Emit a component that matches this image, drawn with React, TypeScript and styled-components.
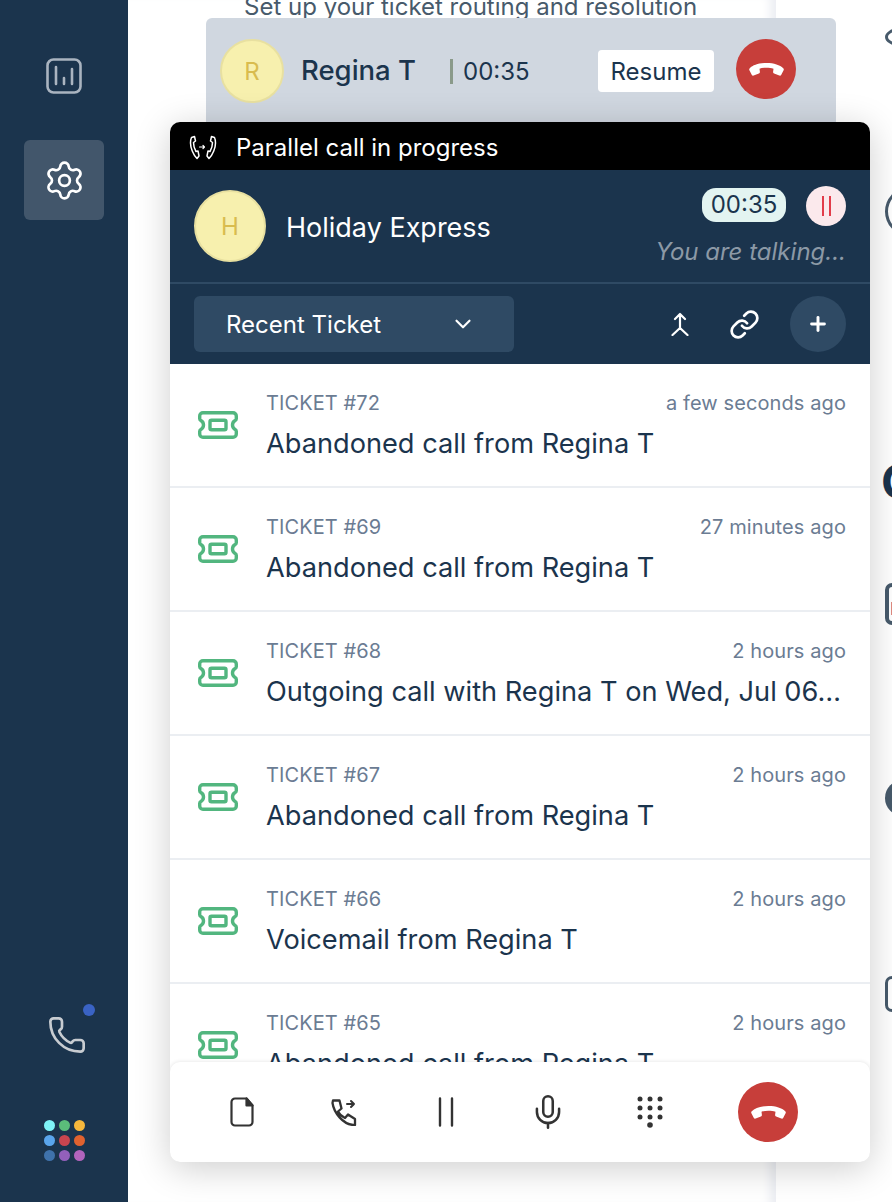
import React from 'react';
import styled, { createGlobalStyle } from 'styled-components';
import { ChevronDown, Link, Mic, Phone, Plus, Settings } from 'lucide-react';

const navy = '#1b344d';

const tickets = [
  { id: 72, when: 'a few seconds ago', title: 'Abandoned call from Regina T' },
  { id: 69, when: '27 minutes ago', title: 'Abandoned call from Regina T' },
  { id: 68, when: '2 hours ago', title: 'Outgoing call with Regina T on Wed, Jul 06, 2022' },
  { id: 67, when: '2 hours ago', title: 'Abandoned call from Regina T' },
  { id: 66, when: '2 hours ago', title: 'Voicemail from Regina T' },
  { id: 65, when: '2 hours ago', title: 'Abandoned call from Regina T' },
];

const appDots = ['#7ef3f7', '#5bbd7a', '#f6b73c', '#5aa5ec', '#c8454f', '#e0622f', '#3f72ab', '#9360ba', '#b264bd'];

const HangUpIcon = () => (
  <svg width="35" height="13" viewBox="0 0 35 13" fill="#fff">
    <path d="M17.500 0C10 0 4 2 .8 5.200c-.6.6-.8 1.300-.4 2.100l2.300 4.500c.4.8 1.200 1.100 2 .8l5.200-2.100c.8-.3 1.100-1 1-1.800l-.4-2.900C12.500 5 15 4.700 17.500 4.700s5 .3 7 1.100l-.4 2.900c-.1.8.2 1.500 1 1.800l5.200 2.100c.8.3 1.600 0 2-.8l2.300-4.500c.4-.8.2-1.500-.4-2.100C31 2 25 0 17.500 0z" />
  </svg>
);

const TicketIcon = () => (
  <svg width="40" height="28" viewBox="0 0 40 28" fill="none" stroke="#52b67f" strokeWidth="3.400" strokeLinejoin="round">
    <path d="M5 1.700h30a3.300 3.300 0 0 1 3.300 3.300v2.800c0 1-.6 1.500-1.500 2-1.500.9-2.300 2.300-2.300 4.200s.8 3.300 2.300 4.200c.9.5 1.500 1 1.500 2V23a3.300 3.300 0 0 1-3.300 3.300H5A3.300 3.300 0 0 1 1.700 23v-2.800c0-1 .6-1.500 1.500-2 1.500-.9 2.300-2.300 2.300-4.200s-.8-3.300-2.300-4.200c-.9-.5-1.500-1-1.500-2V5A3.300 3.300 0 0 1 5 1.700z" />
    <rect x="12" y="9.200" width="16" height="9.600" rx="1.500" />
  </svg>
);

const ChartIcon = () => (
  <svg width="36" height="36" viewBox="0 0 36 36" fill="none" stroke="#aab4c0" strokeWidth="2.600" strokeLinecap="round">
    <rect x="1.500" y="1.500" width="33" height="33" rx="6" />
    <path d="M10 9v17M18 20v6M26 11v15" />
  </svg>
);

const ParallelIcon = () => (
  <svg width="28" height="26" viewBox="0 0 28 26" fill="none" stroke="#fff" strokeWidth="1.500" strokeLinejoin="round" strokeLinecap="round">
    <path d="M2.500 2.500 5.500 1.500 6.500 6 4.500 7.500c0 3.500 1 6.500 2.500 9l2-.5 1 5-2 2.500C4 19.500 1.500 12.500 1.500 8c0-2 .3-4 1-5.500z" />
    <path d="M25.500 2.500 22.500 1.500 21.500 6l2 1.500c0 3.500-1 6.500-2.500 9l-2-.5-1 5 2 2.500C24 19.500 26.500 12.500 26.500 8c0-2-.3-4-1-5.500z" />
    <path d="M10.500 12h5M14 10.500l1.500 1.500-1.500 1.500" strokeWidth="1.200" />
  </svg>
);

const MergeIcon = () => (
  <svg width="18" height="24" viewBox="0 0 18 24" fill="none" stroke="#fff" strokeWidth="2.200" strokeLinecap="round" strokeLinejoin="round">
    <path d="M4 7l5-5 5 5M9 2v14M9 16l-7.500 7M9 16l7.500 7" />
  </svg>
);

const FileIcon = () => (
  <svg width="24" height="30" viewBox="0 0 24 30" fill="none" stroke="#333" strokeWidth="2.200" strokeLinejoin="round">
    <path d="M5 1.500h11.500l6 7V25a3.500 3.500 0 0 1-3.500 3.500H5A3.500 3.500 0 0 1 1.500 25V5A3.500 3.500 0 0 1 5 1.500z" />
    <path d="M16.500 1.500v7h6z" fill="#333" />
  </svg>
);

const TransferIcon = () => (
  <svg width="26" height="27" viewBox="0 0 26 27" fill="none" stroke="#333" strokeWidth="2.300" strokeLinejoin="round" strokeLinecap="round">
    <path d="M2 1.500h6.500l2 8-3.500 3c1.500 3 4 5 7 6.500l3-3.500 7 4.500v6h-2C12 25 3 14 1.500 4z" />
    <path d="M16 5h7M20 2l3 3-3 3" strokeWidth="2" />
  </svg>
);

const PauseBars = () => (
  <svg width="16" height="30" viewBox="0 0 16 30" fill="none" stroke="#333" strokeWidth="2.400" strokeLinecap="round">
    <path d="M2 1.500v27M14 1.500v27" />
  </svg>
);

const DialpadIcon = () => (
  <svg width="26" height="32" viewBox="0 0 26 32" fill="#333">
    {[3, 13, 23].flatMap((cx) => [3, 12, 21].map((cy) => <circle key={`${cx}-${cy}`} cx={cx} cy={cy} r="2.500" />))}
    <circle cx="13" cy="29" r="2.800" />
  </svg>
);

const App: React.FC = () => {
  return (
    <>
      <GlobalStyle />
      <Page>
        <Sidebar>
          <NavItem><ChartIcon /></NavItem>
          <NavItem $active><Settings size={43} strokeWidth={1.5} /></NavItem>
          <SidebarBottom>
            <PhoneButton>
              <Phone size={40} strokeWidth={1.6} />
              <PhoneDot />
            </PhoneButton>
            <AppGrid>
              {appDots.map((color) => <AppDot key={color} $color={color} />)}
            </AppGrid>
          </SidebarBottom>
        </Sidebar>

        <Main>
          <Subtitle>Set up your ticket routing and resolution</Subtitle>
        </Main>

        <RightPanel>
          <RingTop />
          <Ring />
          <Heading>C</Heading>
          <CalendarStub />
          <FilledStub />
          <BoxStub />
        </RightPanel>

        <CallDock>
          <HeldCall>
            <Avatar $size={64}>R</Avatar>
            <HeldName>Regina T</HeldName>
            <HeldTimer>00:35</HeldTimer>
            <ResumeButton>Resume</ResumeButton>
            <EndButton $size={60}><HangUpIcon /></EndButton>
          </HeldCall>

          <Widget>
            <ParallelBar>
              <ParallelIcon />
              Parallel call in progress
            </ParallelBar>

            <CallHeader>
              <Avatar $size={72}>H</Avatar>
              <CallerName>Holiday Express</CallerName>
              <CallStatus>
                <TimerRow>
                  <TimerPill>00:35</TimerPill>
                  <PauseBadge><span /><span /></PauseBadge>
                </TimerRow>
                <Talking>You are talking...</Talking>
              </CallStatus>
            </CallHeader>

            <Toolbar>
              <Dropdown>
                Recent Ticket
                <ChevronDown size={26} strokeWidth={2} />
              </Dropdown>
              <ToolIcons>
                <MergeSlot><MergeIcon /></MergeSlot>
                <Link size={31} strokeWidth={2.1} />
                <AddButton><Plus size={22} strokeWidth={3.2} /></AddButton>
              </ToolIcons>
            </Toolbar>

            <TicketList>
              {tickets.map((ticket) => (
                <TicketRow key={ticket.id}>
                  <TicketIconWrap><TicketIcon /></TicketIconWrap>
                  <TicketBody>
                    <TicketMeta>
                      <span>TICKET #{ticket.id}</span>
                      <span>{ticket.when}</span>
                    </TicketMeta>
                    <TicketTitle>{ticket.title}</TicketTitle>
                  </TicketBody>
                </TicketRow>
              ))}
            </TicketList>

            <ActionBar>
              <ActionSlot><FileIcon /></ActionSlot>
              <ActionSlot><TransferIcon /></ActionSlot>
              <ActionSlot><PauseBars /></ActionSlot>
              <ActionSlot><Mic size={38} strokeWidth={1.6} color="#333" /></ActionSlot>
              <ActionSlot><DialpadIcon /></ActionSlot>
              <ActionEnd $size={60}><HangUpIcon /></ActionEnd>
            </ActionBar>
          </Widget>
        </CallDock>
      </Page>
    </>
  );
};

const GlobalStyle = createGlobalStyle`
  html, body {
    margin: 0;
    padding: 0;
    background: #fff;
  }
  * {
    box-sizing: border-box;
  }
`;

const Page = styled.div`
  position: relative;
  display: flex;
  width: 892px;
  height: 1202px;
  overflow: hidden;
  font-family: Inter, "Liberation Sans", sans-serif;
  color: ${navy};
`;

const Sidebar = styled.nav`
  width: 128px;
  flex-shrink: 0;
  display: flex;
  flex-direction: column;
  align-items: center;
  padding-top: 36px;
  gap: 24px;
  background: ${navy};
`;

const NavItem = styled.div<{ $active?: boolean }>`
  width: 80px;
  height: 80px;
  display: flex;
  align-items: center;
  justify-content: center;
  border-radius: 6px;
  color: #fff;
  background: ${(p) => (p.$active ? '#42566b' : 'transparent')};
`;

const SidebarBottom = styled.div`
  margin-top: auto;
  padding-bottom: 41px;
  display: flex;
  flex-direction: column;
  align-items: center;
  gap: 65px;
`;

const PhoneButton = styled.div`
  position: relative;
  display: flex;
  margin-left: 6px;
  color: #c8ccd1;
`;

const PhoneDot = styled.span`
  position: absolute;
  top: -11px;
  right: -8px;
  width: 12px;
  height: 12px;
  border-radius: 50%;
  background: #3a63c4;
`;

const AppGrid = styled.div`
  display: grid;
  grid-template-columns: repeat(3, 11px);
  gap: 4px;
`;

const AppDot = styled.span<{ $color: string }>`
  width: 11px;
  height: 11px;
  border-radius: 50%;
  background: ${(p) => p.$color};
`;

const Main = styled.main`
  width: 648px;
  flex-shrink: 0;
  padding-left: 116px;
  background: #fff;
  box-shadow: inset -12px 0 10px -6px #eceef3;
`;

const Subtitle = styled.p`
  margin: -8px 0 0;
  font-size: 24px;
  line-height: 30px;
  color: #475a6b;
  white-space: nowrap;
`;

const RightPanel = styled.aside`
  flex: 1;
  display: flex;
  flex-direction: column;
  padding: 28px 0 0 109px;
  background: #fff;
`;

const RingTop = styled.span`
  flex-shrink: 0;
  width: 30px;
  height: 18px;
  border: 3px solid #475a6b;
  border-radius: 50%;
`;

const Ring = styled.span`
  flex-shrink: 0;
  width: 44px;
  height: 47px;
  margin-top: 142px;
  border: 3px solid #475a6b;
  border-radius: 50%;
`;

const Heading = styled.span`
  margin: 223px 0 0 -4px;
  font-size: 48px;
  line-height: 48px;
  font-weight: 700;
  color: ${navy};
`;

const CalendarStub = styled.span`
  position: relative;
  flex-shrink: 0;
  width: 40px;
  height: 42px;
  margin-top: 77px;
  border: 4px solid #475a6b;
  border-radius: 7px;

  &::before {
    content: "";
    position: absolute;
    left: 2px;
    top: 15px;
    width: 2px;
    height: 13px;
    background: #e08a80;
  }
`;

const FilledStub = styled.span`
  flex-shrink: 0;
  width: 36px;
  height: 36px;
  margin-top: 155px;
  border-radius: 50%;
  background: #475a6b;
`;

const BoxStub = styled.span`
  flex-shrink: 0;
  width: 36px;
  height: 36px;
  margin-top: 160px;
  border: 3px solid #475a6b;
  border-radius: 7px;
`;

const CallDock = styled.div`
  position: absolute;
  left: 170px;
  top: 18px;
  width: 700px;
  display: flex;
  flex-direction: column;
`;

const HeldCall = styled.div`
  width: 630px;
  height: 130px;
  margin: 0 0 -26px 36px;
  padding: 21px 40px 0 14px;
  display: flex;
  align-items: flex-start;
  background: #d0d7e0;
  border-radius: 6px;
`;

const Avatar = styled.div<{ $size: number }>`
  width: ${(p) => p.$size}px;
  height: ${(p) => p.$size}px;
  flex-shrink: 0;
  display: flex;
  align-items: center;
  justify-content: center;
  border-radius: 50%;
  border: 2px solid #e8e0a0;
  background: #f7f0ae;
  color: #d9bc4e;
  font-size: 24px;
`;

const HeldName = styled.span`
  margin: 13px 0 0 17px;
  font-size: 27.500px;
  line-height: 36px;
  font-weight: 500;
`;

const HeldTimer = styled.span`
  margin: 20px auto 0 34px;
  padding-left: 10px;
  height: 25px;
  display: flex;
  align-items: center;
  border-left: 3px solid #8a9a8a;
  font-size: 24px;
`;

const ResumeButton = styled.button`
  width: 116px;
  height: 42px;
  margin: 11px 22px 0 0;
  border: none;
  border-radius: 4px;
  background: #fff;
  color: ${navy};
  font: inherit;
  font-size: 24px;
`;

const EndButton = styled.div<{ $size: number }>`
  width: ${(p) => p.$size}px;
  height: ${(p) => p.$size}px;
  flex-shrink: 0;
  display: flex;
  align-items: center;
  justify-content: center;
  border-radius: 50%;
  background: #c73e3a;
`;

const ActionEnd = styled(EndButton)`
  margin-left: 37px;
`;

const Widget = styled.section`
  position: relative;
  height: 1040px;
  display: flex;
  flex-direction: column;
  background: #fff;
  border-radius: 10px;
  box-shadow: 0 6px 36px rgba(0, 0, 0, 0.2);
  overflow: hidden;
`;

const ParallelBar = styled.div`
  height: 48px;
  flex-shrink: 0;
  padding: 3px 0 0 19px;
  display: flex;
  align-items: center;
  gap: 19px;
  background: #000;
  color: #fff;
  font-size: 24px;
`;

const CallHeader = styled.div`
  height: 114px;
  flex-shrink: 0;
  padding: 0 24px;
  display: flex;
  align-items: center;
  background: ${navy};
  border-bottom: 2px solid #2f4a64;
`;

const CallerName = styled.span`
  margin: 2px 0 0 20px;
  font-size: 27px;
  color: #fff;
`;

const CallStatus = styled.div`
  margin: -2px 0 0 auto;
  display: flex;
  flex-direction: column;
  align-items: flex-end;
  gap: 13px;
`;

const TimerRow = styled.div`
  display: flex;
  align-items: center;
  gap: 20px;
`;

const TimerPill = styled.span`
  width: 84px;
  height: 34px;
  margin-bottom: 2px;
  display: flex;
  align-items: center;
  justify-content: center;
  border-radius: 14px;
  background: #e3f4f1;
  color: ${navy};
  font-size: 24px;
`;

const PauseBadge = styled.span`
  width: 40px;
  height: 40px;
  display: flex;
  align-items: center;
  justify-content: center;
  gap: 5px;
  border-radius: 50%;
  background: #fbe9ec;

  span {
    width: 2px;
    height: 20px;
    background: #e23c4a;
  }
`;

const Talking = styled.span`
  font-size: 24px;
  line-height: 26px;
  font-style: italic;
  color: #8c99a6;
`;

const Toolbar = styled.div`
  height: 80px;
  flex-shrink: 0;
  padding: 12px 24px;
  display: flex;
  align-items: center;
  justify-content: space-between;
  background: ${navy};
`;

const Dropdown = styled.div`
  width: 320px;
  height: 56px;
  padding: 0 38px 0 32px;
  display: flex;
  align-items: center;
  justify-content: space-between;
  border-radius: 6px;
  background: #2f4a64;
  color: #fff;
  font-size: 24px;
`;

const ToolIcons = styled.div`
  display: flex;
  align-items: center;
  gap: 30px;
  color: #fff;
`;

const MergeSlot = styled.div`
  display: flex;
  margin-right: 10px;
`;

const AddButton = styled.span`
  width: 56px;
  height: 56px;
  display: flex;
  align-items: center;
  justify-content: center;
  border-radius: 50%;
  background: #2f4a64;
`;

const TicketList = styled.div`
  flex: 1;
  min-height: 0;
  overflow: hidden;
`;

const TicketRow = styled.div`
  height: 124px;
  padding: 0 24px 0 28px;
  display: flex;
  align-items: center;
  gap: 28px;
  border-bottom: 2px solid #ebeef2;
`;

const TicketIconWrap = styled.div`
  display: flex;
  flex-shrink: 0;
`;

const TicketBody = styled.div`
  flex: 1;
  min-width: 0;
  padding-top: 2px;
`;

const TicketMeta = styled.div`
  display: flex;
  justify-content: space-between;
  margin-bottom: 12px;
  font-size: 20px;
  line-height: 24px;
  letter-spacing: 0.1px;
  color: #6b7c93;
`;

const TicketTitle = styled.div`
  font-size: 27.200px;
  line-height: 34px;
  white-space: nowrap;
  overflow: hidden;
  text-overflow: ellipsis;
`;

const ActionBar = styled.div`
  height: 100px;
  flex-shrink: 0;
  position: relative;
  padding-left: 21px;
  display: flex;
  align-items: center;
  background: #fff;
  border-radius: 10px;
  box-shadow: 0 0 4px rgba(0, 0, 0, 0.12);
`;

const ActionSlot = styled.div`
  width: 102px;
  display: flex;
  justify-content: center;
`;

export default App;
